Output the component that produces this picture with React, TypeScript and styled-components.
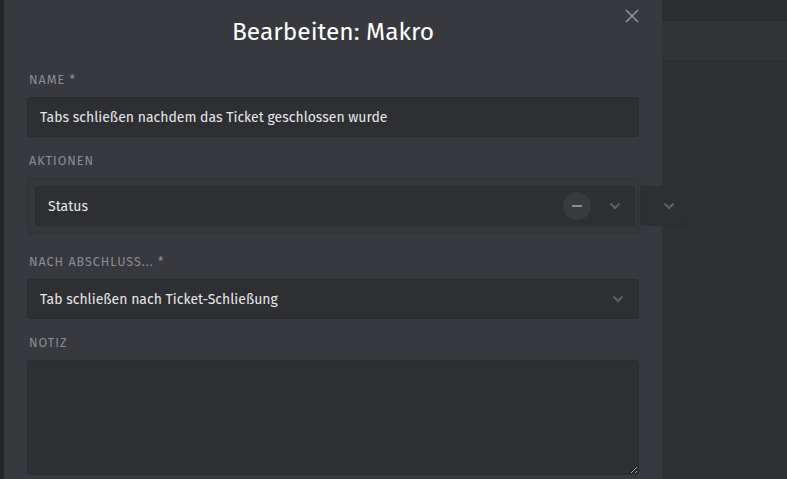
import styled, { createGlobalStyle } from 'styled-components'

const GlobalStyle = createGlobalStyle`
  html, body {
    margin: 0;
    padding: 0;
    background: #2f3034;
  }
  body {
    font-family: "Fira Sans", "Open Sans", "Noto Sans", sans-serif;
    -webkit-font-smoothing: antialiased;
  }
  * { box-sizing: border-box; }
`

const Page = styled.div`
  display: flex;
  width: 787px;
  height: 479px;
  overflow: hidden;
  background: #2f3034;
`

const SideStrip = styled.div`
  width: 4px;
  flex-shrink: 0;
  background: #26272b;
`

const Modal = styled.div`
  position: relative;
  z-index: 1;
  width: 658px;
  flex-shrink: 0;
  padding: 0 23px;
  background: #38393e;
`

const Header = styled.header`
  position: relative;
  height: 72px;
  padding-top: 16px;
  text-align: center;
`

const Title = styled.h1`
  margin: 0;
  font-size: 24.5px;
  line-height: 32px;
  font-weight: 400;
  color: #ffffff;
`

const CloseButton = styled.button`
  position: absolute;
  top: 6px;
  right: -3px;
  width: 20px;
  height: 20px;
  padding: 0;
  border: 0;
  background: none;
  display: flex;
  align-items: center;
  justify-content: center;
  color: #8f9196;
`

const Field = styled.div<{ $gap?: number }>`
  margin-bottom: ${p => p.$gap ?? 16}px;
`

const Label = styled.label`
  display: block;
  padding-left: 2px;
  font-size: 12.5px;
  line-height: 16px;
  letter-spacing: 1px;
  text-transform: uppercase;
  color: #8a8d93;
  margin-bottom: 9px;
`

const Control = styled.div<{ $padRight?: number }>`
  display: flex;
  align-items: center;
  height: 40px;
  padding: 0 ${p => p.$padRight ?? 14}px 0 12px;
  background: #2e2f33;
  border: 1px solid #2b2c30;
  border-radius: 3px;
  font-size: 14px;
  color: #e6e7e9;
`

const ControlText = styled.span`
  flex: 1;
`

const ActionsLine = styled.div`
  display: flex;
  align-items: flex-start;
`

const ActionsBox = styled.div`
  width: 612px;
  flex-shrink: 0;
  padding: 7px 3px 7px 7px;
  border: 1px solid #2f3034;
  border-radius: 4px;
  background: #36373b;
`

const RemoveButton = styled.span`
  width: 28px;
  height: 28px;
  border-radius: 50%;
  background: #393a3f;
  display: flex;
  align-items: center;
  justify-content: center;
  margin-right: 18px;

  &::before {
    content: "";
    width: 10px;
    height: 2px;
    background: #8a8c91;
  }
`

const SideSelect = styled.div`
  width: 47px;
  height: 40px;
  margin: 8px 0 0 1px;
  padding-left: 10px;
  flex-shrink: 0;
  border-radius: 3px;
  background: #2e2f33;
  border: 1px solid #2b2c30;
  display: flex;
  align-items: center;
  justify-content: center;
`

const NoteArea = styled.textarea`
  display: block;
  width: 100%;
  height: 115px;
  resize: vertical;
  background: #2e2f33;
  border: 1px solid #2b2c30;
  border-radius: 3px;
  color: #e6e7e9;
  font: inherit;
  color-scheme: dark;
  outline: none;
`

const RightPane = styled.div`
  flex: 1;
  display: flex;
  flex-direction: column;
`

const TopBar = styled.div`
  height: 21px;
  background: #2c2d31;
  border-bottom: 1px solid #2a2b2f;
`

const SubBar = styled.div`
  height: 40px;
  background: #323337;
  border-bottom: 1px solid #2b2c30;
`

const Chevron = () => (
  <svg width="12" height="8" viewBox="0 0 12 8" fill="none">
    <path d="M1.5 1.5 L6 6 L10.5 1.5" stroke="#5f6166" strokeWidth="2" />
  </svg>
)

export default function App() {
  return (
    <>
      <GlobalStyle />
      <Page>
        <SideStrip />
        <Modal>
          <Header>
            <Title>Bearbeiten: Makro</Title>
            <CloseButton aria-label="Schließen">
              <svg width="14" height="14" viewBox="0 0 14 14">
                <path d="M1 1 L13 13 M13 1 L1 13" stroke="currentColor" strokeWidth="1.6" />
              </svg>
            </CloseButton>
          </Header>

          <Field>
            <Label>Name *</Label>
            <Control>
              <ControlText>Tabs schließen nachdem das Ticket geschlossen wurde</ControlText>
            </Control>
          </Field>

          <Field $gap={20}>
            <Label>Aktionen</Label>
            <ActionsLine>
              <ActionsBox>
                <Control $padRight={13}>
                  <ControlText>Status</ControlText>
                  <RemoveButton />
                  <Chevron />
                </Control>
              </ActionsBox>
              <SideSelect>
                <Chevron />
              </SideSelect>
            </ActionsLine>
          </Field>

          <Field>
            <Label>Nach Abschluss... *</Label>
            <Control>
              <ControlText>Tab schließen nach Ticket-Schließung</ControlText>
              <Chevron />
            </Control>
          </Field>

          <Field>
            <Label>Notiz</Label>
            <NoteArea />
          </Field>
        </Modal>
        <RightPane>
          <TopBar />
          <SubBar />
        </RightPane>
      </Page>
    </>
  )
}
